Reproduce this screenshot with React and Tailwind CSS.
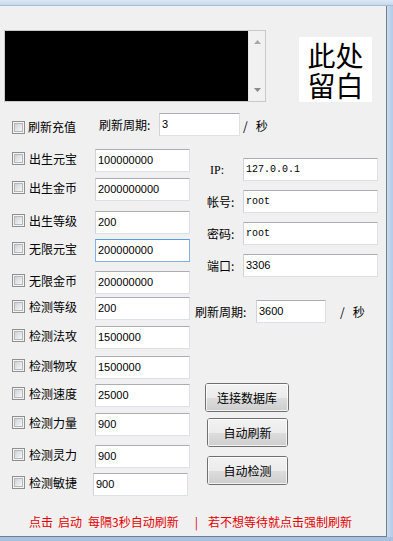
import React from "react";

const CJK = "font-['Noto_Sans_CJK_SC',sans-serif]";

const LEFT_ROWS = [
  { label: "出生元宝", value: "100000000", gap: "mt-[13px]" },
  { label: "出生金币", value: "2000000000", gap: "mt-[6px]" },
  { label: "出生等级", value: "200", gap: "mt-[10px]" },
  { label: "无限元宝", value: "200000000", gap: "mt-[5px]", focus: true },
  { label: "无限金币", value: "200000000", gap: "mt-[9px]" },
  { label: "检测等级", value: "200", gap: "mt-[3px]" },
  { label: "检测法攻", value: "1500000", gap: "mt-[6px]" },
  { label: "检测物攻", value: "1500000", gap: "mt-[7px]" },
  { label: "检测速度", value: "25000", gap: "mt-[5px]" },
  { label: "检测力量", value: "900", gap: "mt-[6px]" },
  { label: "检测灵力", value: "900", gap: "mt-[9px]" },
  { label: "检测敏捷", value: "900", gap: "mt-[5px]", shift: true },
];

const DB_ROWS = [
  { label: "IP:", value: "127.0.0.1", gap: "mt-[22px]", mono: true },
  { label: "帐号:", value: "root", gap: "mt-[9px]", mono: true },
  { label: "密码:", value: "root", gap: "mt-[9px]", mono: true },
  { label: "端口:", value: "3306", gap: "mt-[9px]" },
];

function Checkbox() {
  return (
    <div className="w-[13px] h-[13px] shrink-0 border border-[#8e8f8f] bg-[#f4f4f4] p-[1px]">
      <div className="w-full h-full border border-[#b4b8bd] bg-gradient-to-br from-[#cfd2d6] to-[#f7f7f7]" />
    </div>
  );
}

function TextBox({ value, className = "", mono, focus }) {
  return (
    <div
      className={`h-[23px] bg-white border flex items-center pl-[2px] text-[#000] ${
        focus
          ? "border-[#7eb4ea] border-t-[#569de5]"
          : "border-[#dde1e6] border-t-[#abadb3] border-l-[#d0d3d8]"
      } ${
        mono
          ? "font-['Liberation_Mono',monospace] text-[10px]"
          : "font-['Liberation_Sans',sans-serif] text-[11px]"
      } ${className}`}
    >
      {value}
    </div>
  );
}

function WinButton({ children, className = "" }) {
  return (
    <div
      className={`h-[29px] rounded-[3px] border border-[#707070] overflow-hidden flex flex-col relative ${className}`}
    >
      <div className="flex-1 bg-gradient-to-b from-[#f2f2f2] to-[#ebebeb] border-x border-t border-[#fcfcfc]" />
      <div className="flex-1 bg-gradient-to-b from-[#dddddd] to-[#cfcfcf] border-x border-b border-[#f3f3f3]" />
      <span
        className={`absolute inset-0 flex items-center justify-center text-[12px] leading-none text-black ${CJK}`}
      >
        {children}
      </span>
    </div>
  );
}

function PerSecond({ className = "" }) {
  return (
    <span className={`flex items-center leading-none ${className}`}>
      <span>/</span>
      <span className="ml-[8px]">秒</span>
    </span>
  );
}

function OutputBox() {
  return (
    <div className="w-[262px] h-[72px] border border-[#c9c9c9] flex">
      <div className="flex-1 bg-black" />
      <div className="w-[17px] bg-[#f1f1f1] border-l border-[#e6e6e6] flex flex-col items-center justify-between py-[9px]">
        <svg width="7" height="4" viewBox="0 0 7 4">
          <path d="M0 4 L3.5 0 L7 4 Z" fill="#a8a8a8" />
        </svg>
        <svg width="7" height="4" viewBox="0 0 7 4">
          <path d="M0 0 L3.5 4 L7 0 Z" fill="#8a8a8a" />
        </svg>
      </div>
    </div>
  );
}

export default function App() {
  return (
    <div className="w-[393px] h-[541px] bg-[#bcd2ea] flex flex-col overflow-hidden">
      {/* window frame, top strip */}
      <div className="h-[6px] shrink-0 bg-gradient-to-b from-[#dde8f5] to-[#c7d9ee] border-b border-[#a9bbd0]" />

      <div className="flex flex-1">
        {/* client area */}
        <div className={`w-[387px] h-[531px] bg-[#f0f0f0] border-r border-b border-[#6f7f92] flex flex-col ${CJK}`}>
          {/* output + placeholder */}
          <div className="flex items-start">
            <div className="ml-[4px] mt-[24px]">
              <OutputBox />
            </div>
            <div
              className={`ml-[33px] mt-[31px] w-[73px] h-[65px] bg-white flex flex-col items-center justify-center text-[28px] text-black ${CJK}`}
            >
              <div className="h-[30px] leading-[30px]">此处</div>
              <div className="h-[30px] leading-[30px]">留白</div>
            </div>
          </div>

          {/* refresh row */}
          <div className="mt-[11px] flex items-center h-[23px] text-[12px] text-black">
            <div className="w-[99px] pl-[12px] flex items-center gap-[3px] pt-[5px]">
              <Checkbox />
              <span className="leading-none">刷新充值</span>
            </div>
            <span className="w-[60px] leading-none">刷新周期:</span>
            <TextBox value="3" className="w-[81px]" />
            <PerSecond className="ml-[3px] pt-[2px]" />
          </div>

          <div className="flex">
            {/* left column */}
            <div className="w-[190px] flex flex-col">
              {LEFT_ROWS.map((row) => (
                <div key={row.label} className={`flex items-center h-[23px] ${row.gap}`}>
                  <div className="w-[95px] pl-[12px] flex items-center gap-[4px] -translate-y-[2px]">
                    <Checkbox />
                    <span className="text-[12px] leading-none text-black">{row.label}</span>
                  </div>
                  <TextBox
                    value={row.value}
                    focus={row.focus}
                    className={row.shift ? "w-[95px] -ml-[2px]" : "w-[95px]"}
                  />
                </div>
              ))}
            </div>

            {/* right column */}
            <div className="flex-1 flex flex-col text-[12px] text-black">
              {DB_ROWS.map((row) => (
                <div key={row.label} className={`flex items-center h-[23px] ${row.gap}`}>
                  <span
                    className={`w-[53px] leading-none ${
                      row.label === "IP:" ? "font-['Liberation_Serif',serif] pl-[20px]" : "pl-[17px]"
                    }`}
                  >
                    {row.label}
                  </span>
                  <TextBox value={row.value} mono={row.mono} className="w-[135px]" />
                </div>
              ))}

              <div className="mt-[23px] flex items-center h-[23px]">
                <span className="w-[66px] pl-[5px] leading-none">刷新周期:</span>
                <TextBox value="3600" className="w-[70px]" />
                <PerSecond className="ml-[14px]" />
              </div>

              <WinButton className="mt-[60px] ml-[15px] w-[84px]">连接数据库</WinButton>
              <WinButton className="mt-[6px] ml-[17px] w-[81px]">自动刷新</WinButton>
              <WinButton className="mt-[9px] ml-[17px] w-[81px]">自动检测</WinButton>
            </div>
          </div>

          {/* hint */}
          <div className="mt-[18px] pl-[29px] flex items-center h-[16px] text-[12px] leading-none text-[#e40000]">
            <span>点击</span>
            <span className="ml-[5px]">启动</span>
            <span className="ml-[6px]">每隔3秒自动刷新</span>
            <span className="ml-[16px]">|</span>
            <span className="ml-[10px]">若不想等待就点击强制刷新</span>
          </div>
        </div>
        <div className="flex-1 bg-gradient-to-r from-[#c9dbef] to-[#b3cbe6]" />
      </div>
      <div className="h-[4px] shrink-0 bg-[#a9c2df]" />
    </div>
  );
}
